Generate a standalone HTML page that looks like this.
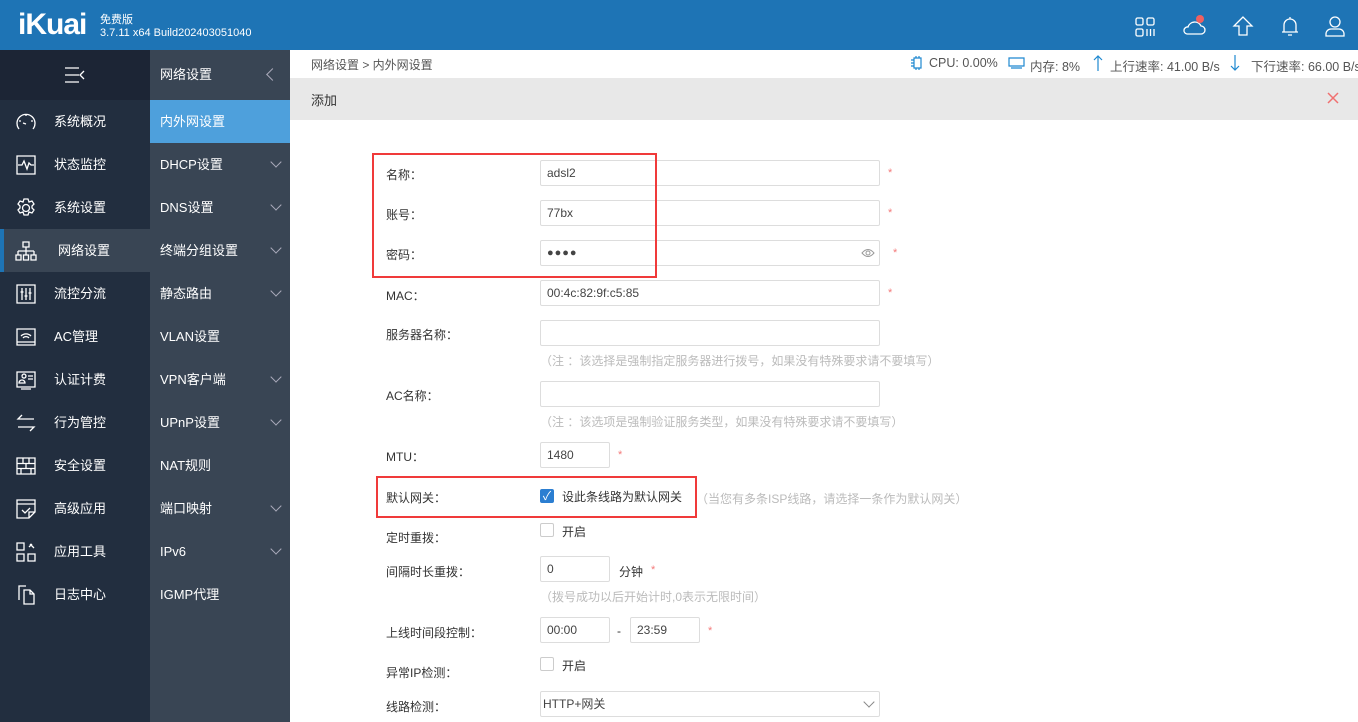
<!DOCTYPE html>
<html><head><meta charset="utf-8"><style>
*{margin:0;padding:0;box-sizing:border-box}
body{width:1358px;height:722px;overflow:hidden;position:relative;background:#fff;font-family:"Liberation Sans","Noto Sans CJK SC",sans-serif;font-size:12px;color:#333}
.a{position:absolute}
#hd{left:0;top:0;width:1358px;height:50px;background:#1e74b5}
#s1{left:0;top:50px;width:150px;height:672px;background:#222e3f}
#s1t{left:0;top:50px;width:150px;height:50px;background:#1c2535}
#s2{left:150px;top:50px;width:140px;height:672px;background:#394554}
.m1{position:absolute;left:0;width:150px;height:43px;color:#fff;font-size:13px;line-height:43px;padding-left:54px}
.m1 svg{position:absolute;left:15px;top:11px}
.m2{position:absolute;left:150px;width:140px;height:43px;color:#fff;font-size:13px;line-height:43px;padding-left:10px}
.m2 .ch{position:absolute;right:10px;top:15px;width:8px;height:8px;border-right:1px solid #aab;border-bottom:1px solid #aab;transform:rotate(45deg)}
.lb{position:absolute;left:386px;font-size:12px;color:#333}
.in{position:absolute;left:540px;height:26px;border:1px solid #ddd;border-radius:2px;padding-left:6px;line-height:24px;font-size:12px;color:#444;background:#fff}
.st{position:absolute;color:#f47a7a;font-size:11px}
.nt{position:absolute;left:540px;color:#bbb;font-size:12px}
.cb{position:absolute;left:540px;width:14px;height:14px;border:1px solid #ccc;border-radius:2px;background:#fff}
.ic{stroke:#fff;fill:none;stroke-width:1.3}
.bi{stroke:#1e88d0;fill:none;stroke-width:1.2}
.sb{position:absolute;top:56px;color:#555;font-size:12.5px;white-space:nowrap}
</style></head><body>
<div id="hd" class="a"></div>
<div class="a" style="left:18px;top:8px;color:#fff;font-size:30px;font-weight:bold;letter-spacing:-1px;line-height:34px">iKuai</div>
<div class="a" style="left:100px;top:14px;color:#fff;font-size:11px;line-height:13px">免费版<br>3.7.11 x64 Build202403051040</div>
<svg class="a" style="left:1134px;top:16px" width="22" height="22"><g class="ic"><rect x="2" y="2" width="7" height="7" rx="1.5"/><rect x="13" y="2" width="7" height="7" rx="1.5"/><rect x="2" y="13" width="7" height="7" rx="1.5"/><path d="M13 13v7M16.5 13v7M20 13v7"/></g></svg>
<svg class="a" style="left:1182px;top:14px" width="26" height="24"><path class="ic" d="M5 20h14a4 4 0 0 0 0-8 7 7 0 0 0-13 1 3.5 3.5 0 0 0-1 7z"/><circle cx="18" cy="5" r="4" fill="#f06060"/></svg>
<svg class="a" style="left:1232px;top:15px" width="22" height="22"><path class="ic" d="M11 2L2 11h5v9h8v-9h5z"/></svg>
<svg class="a" style="left:1279px;top:15px" width="22" height="22"><path class="ic" d="M5 17V10a6 6 0 0 1 12 0v7zM3 17h16M9 20h4M11 2v2"/></svg>
<svg class="a" style="left:1324px;top:15px" width="22" height="22"><g class="ic"><circle cx="11" cy="7" r="5"/><path d="M2 21v-2a5 5 0 0 1 5-5h8a5 5 0 0 1 5 5v2z"/></g></svg>

<div id="s1" class="a"></div><div id="s1t" class="a"></div>
<svg class="a" style="left:64px;top:67px" width="22" height="16"><path class="ic" d="M1 1h14M1 8h14M1 15h14M20 4l-4 4 4 4"/></svg>
<div id="s2" class="a"></div>
<div class="a" style="left:160px;top:50px;height:50px;line-height:50px;color:#fff;font-size:13px">网络设置</div>
<div class="a" style="left:268px;top:70px;width:9px;height:9px;border-left:1px solid #aab;border-bottom:1px solid #aab;transform:rotate(45deg)"></div>

<div class="m1" style="top:100px"><svg width="22" height="22"><path class="ic" d="M4 18a9 9 0 1 1 14 0M8 12l3 1M11 3v2M4 10h2M16 10h2"/></svg>系统概况</div>
<div class="m1" style="top:143px"><svg width="22" height="22"><path class="ic" d="M2 2h18v18H2zM3 11h4l2-4 3 8 2-6 2 2h3"/></svg>状态监控</div>
<div class="m1" style="top:186px"><svg width="22" height="22"><g class="ic"><circle cx="11" cy="11" r="3.5"/><path d="M9 2h4l1 3 3-1 2 3-2 2 0 2 2 2-2 3-3-1-1 3H9l-1-3-3 1-2-3 2-2V9L3 7l2-3 3 1z"/></g></svg>系统设置</div>
<div class="m1" style="top:229px;background:#394554;border-left:4px solid #1e74b5"><svg width="22" height="22" style="left:11px"><path class="ic" d="M8 2h6v5H8zM11 7v4M3 11h16M3 11v4M11 11v4M19 11v4M1 15h5v5H1zM8.5 15h5v5h-5zM16 15h5v5h-5z"/></svg>网络设置</div>
<div class="m1" style="top:272px"><svg width="22" height="22"><path class="ic" d="M2 2h18v18H2zM7 5v12M11 5v12M15 5v12M5.5 9h3M9.5 13h3M13.5 10h3"/></svg>流控分流</div>
<div class="m1" style="top:315px"><svg width="22" height="22"><path class="ic" d="M2 3h18v16H2zM2 16h18M6 10a7 7 0 0 1 10 0M8 12a4 4 0 0 1 6 0"/></svg>AC管理</div>
<div class="m1" style="top:358px"><svg width="22" height="22"><path class="ic" d="M2 3h18v15H2zM7 7a2 2 0 1 1 0 .1M4 14a3 3 0 0 1 6 0zM13 7h5M13 10h5M6 20h10"/></svg>认证计费</div>
<div class="m1" style="top:401px"><svg width="22" height="22"><path class="ic" d="M19 7H3l4-4M3 15h16l-4 4"/></svg>行为管控</div>
<div class="m1" style="top:444px"><svg width="22" height="22"><path class="ic" d="M2 3h18v16H2zM2 8.5h18M2 13.5h18M8 3v5.5M14 3v5.5M11 8.5v5M6 13.5V19M16 13.5V19"/></svg>安全设置</div>
<div class="m1" style="top:487px"><svg width="22" height="22"><path class="ic" d="M14 20H2V2h18v12zM14 20v-6h6M2 6h18M7 12l3 3 5-5"/></svg>高级应用</div>
<div class="m1" style="top:530px"><svg width="22" height="22"><path class="ic" d="M2 2h7v7H2zM2 13h7v7H2zM13 13h7v7h-7zM15 3l4 4M14 6l3-3"/></svg>应用工具</div>
<div class="m1" style="top:573px"><svg width="22" height="22"><path class="ic" d="M4 16V2h7M9 6h6l4 4v10H9zM15 6v4h4"/></svg>日志中心</div>

<div class="m2" style="top:100px;background:#4ea0dc">内外网设置</div>
<div class="m2" style="top:143px">DHCP设置<span class="ch"></span></div>
<div class="m2" style="top:186px">DNS设置<span class="ch"></span></div>
<div class="m2" style="top:229px">终端分组设置<span class="ch"></span></div>
<div class="m2" style="top:272px">静态路由<span class="ch"></span></div>
<div class="m2" style="top:315px">VLAN设置</div>
<div class="m2" style="top:358px">VPN客户端<span class="ch"></span></div>
<div class="m2" style="top:401px">UPnP设置<span class="ch"></span></div>
<div class="m2" style="top:444px">NAT规则</div>
<div class="m2" style="top:487px">端口映射<span class="ch"></span></div>
<div class="m2" style="top:530px">IPv6<span class="ch"></span></div>
<div class="m2" style="top:573px">IGMP代理</div>

<div class="a" style="left:311px;top:56px;color:#555">网络设置 &gt; 内外网设置</div>
<svg class="a" style="left:908px;top:55px" width="18" height="16"><path class="bi" d="M6 3h7v10H6zM3 5h3M3 8h3M3 11h3M8 1v2M11 1v2M8 13v2M11 13v2"/></svg>
<div class="sb" style="left:929px">CPU: 0.00%</div>
<svg class="a" style="left:1007px;top:55px" width="20" height="16"><path class="bi" d="M2 3h15v8H2zM4 13h11"/></svg>
<div class="sb" style="left:1030px">内存: 8%</div>
<svg class="a" style="left:1092px;top:54px" width="12" height="18"><path class="bi" d="M6 2v15M2 6l4-4 4 4"/></svg>
<div class="sb" style="left:1110px">上行速率: 41.00 B/s</div>
<svg class="a" style="left:1229px;top:54px" width="12" height="18"><path class="bi" d="M6 1v15M2 12l4 4 4-4"/></svg>
<div class="sb" style="left:1251px">下行速率: 66.00 B/s</div>
<div class="a" style="left:290px;top:78px;width:1068px;height:42px;background:#e8e8e8"></div>
<div class="a" style="left:311px;top:90px;font-size:13px;color:#333">添加</div>
<svg class="a" style="left:1327px;top:92px" width="12" height="12"><path d="M1 1l10 10M11 1L1 11" stroke="#f07070" stroke-width="1.5"/></svg>

<div class="lb" style="top:166px">名称：</div><div class="in" style="top:160px;width:340px">adsl2</div><div class="st" style="left:888px;top:167px">*</div>
<div class="lb" style="top:206px">账号：</div><div class="in" style="top:200px;width:340px">77bx</div><div class="st" style="left:888px;top:207px">*</div>
<div class="lb" style="top:246px">密码：</div><div class="in" style="top:240px;width:340px;font-size:11px;letter-spacing:1px">●●●●<svg style="position:absolute;right:4px;top:7px" width="14" height="10"><path d="M1 5q6-7 12 0q-6 7-12 0z" fill="none" stroke="#999"/><circle cx="7" cy="5" r="2" fill="none" stroke="#999"/></svg></div><div class="st" style="left:893px;top:247px">*</div>
<div class="a" style="left:372px;top:153px;width:285px;height:125px;border:2px solid #f03a3a"></div>

<div class="lb" style="top:287px">MAC：</div><div class="in" style="top:280px;width:340px">00:4c:82:9f:c5:85</div><div class="st" style="left:888px;top:287px">*</div>
<div class="lb" style="top:326px">服务器名称：</div><div class="in" style="top:320px;width:340px"></div>
<div class="nt" style="top:352px">（注 ：该选择是强制指定服务器进行拨号，如果没有特殊要求请不要填写）</div>
<div class="lb" style="top:387px">AC名称：</div><div class="in" style="top:381px;width:340px"></div>
<div class="nt" style="top:413px">（注 ：该选项是强制验证服务类型，如果没有特殊要求请不要填写）</div>
<div class="lb" style="top:448px">MTU：</div><div class="in" style="top:442px;width:70px">1480</div><div class="st" style="left:618px;top:449px">*</div>

<div class="lb" style="top:489px">默认网关：</div>
<div class="cb" style="top:489px;background:#2b7ed1;border-color:#2b7ed1;color:#fff;font-size:12px;line-height:12px;text-align:center">✓</div>
<div class="a" style="left:562px;top:488px">设此条线路为默认网关</div>
<div class="a" style="left:696px;top:490px;color:#bbb">（当您有多条ISP线路，请选择一条作为默认网关）</div>
<div class="a" style="left:376px;top:476px;width:321px;height:42px;border:2px solid #f03a3a"></div>

<div class="lb" style="top:529px">定时重拨：</div><div class="cb" style="top:523px"></div><div class="a" style="left:562px;top:523px">开启</div>
<div class="lb" style="top:563px">间隔时长重拨：</div><div class="in" style="top:556px;width:70px">0</div><div class="a" style="left:619px;top:563px">分钟</div><div class="st" style="left:651px;top:564px">*</div>
<div class="nt" style="top:588px">（拨号成功以后开始计时,0表示无限时间）</div>
<div class="lb" style="top:624px">上线时间段控制：</div><div class="in" style="top:617px;width:70px">00:00</div><div class="a" style="left:617px;top:624px">-</div><div class="in" style="left:630px;top:617px;width:70px">23:59</div><div class="st" style="left:708px;top:625px">*</div>
<div class="lb" style="top:664px">异常IP检测：</div><div class="cb" style="top:657px"></div><div class="a" style="left:562px;top:657px">开启</div>
<div class="lb" style="top:698px">线路检测：</div><div class="in" style="top:691px;width:340px;padding-left:2px">HTTP+网关<span style="position:absolute;right:6px;top:6px;width:8px;height:8px;border-right:1px solid #888;border-bottom:1px solid #888;transform:rotate(45deg)"></span></div>
</body></html>
